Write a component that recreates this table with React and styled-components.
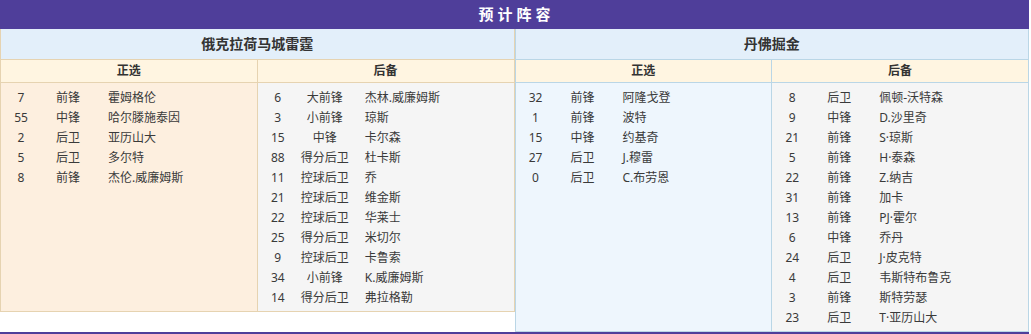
import React from "react";
import styled, { createGlobalStyle } from "styled-components";

const GlobalStyle = createGlobalStyle`
  body {
    margin: 0;
    background: #ffffff;
    font-family: "Noto Sans", "Noto Sans CJK SC", sans-serif;
  }
`;

const teams = [
  {
    name: "俄克拉荷马城雷霆",
    side: "home",
    starters: [
      ["7", "前锋", "霍姆格伦"],
      ["55", "中锋", "哈尔滕施泰因"],
      ["2", "后卫", "亚历山大"],
      ["5", "后卫", "多尔特"],
      ["8", "前锋", "杰伦.威廉姆斯"],
    ],
    bench: [
      ["6", "大前锋", "杰林.威廉姆斯"],
      ["3", "小前锋", "琼斯"],
      ["15", "中锋", "卡尔森"],
      ["88", "得分后卫", "杜卡斯"],
      ["11", "控球后卫", "乔"],
      ["21", "控球后卫", "维金斯"],
      ["22", "控球后卫", "华莱士"],
      ["25", "得分后卫", "米切尔"],
      ["9", "控球后卫", "卡鲁索"],
      ["34", "小前锋", "K.威廉姆斯"],
      ["14", "得分后卫", "弗拉格勒"],
    ],
  },
  {
    name: "丹佛掘金",
    side: "away",
    starters: [
      ["32", "前锋", "阿隆戈登"],
      ["1", "前锋", "波特"],
      ["15", "中锋", "约基奇"],
      ["27", "后卫", "J.穆雷"],
      ["0", "后卫", "C.布劳恩"],
    ],
    bench: [
      ["8", "后卫", "佩顿-沃特森"],
      ["9", "中锋", "D.沙里奇"],
      ["21", "前锋", "S·琼斯"],
      ["5", "前锋", "H·泰森"],
      ["22", "前锋", "Z.纳吉"],
      ["31", "前锋", "加卡"],
      ["13", "前锋", "PJ·霍尔"],
      ["6", "中锋", "乔丹"],
      ["24", "后卫", "J·皮克特"],
      ["4", "后卫", "韦斯特布鲁克"],
      ["3", "前锋", "斯特劳瑟"],
      ["23", "后卫", "T·亚历山大"],
    ],
  },
];

const palette = {
  home: { border: "#e6d3b1", starters: "#fdefdf" },
  away: { border: "#bad6e6", starters: "#eef6fd" },
};

function App() {
  return (
    <>
      <GlobalStyle />
      <Wrapper>
        <Title>预计阵容</Title>
        <Teams>
          {teams.map((team) => (
            <TeamPanel key={team.name} $border={palette[team.side].border}>
              <TeamName>{team.name}</TeamName>
              <Columns $border={palette[team.side].border}>
                <Column $border={palette[team.side].border}>
                  <ColumnHead $border={palette[team.side].border}>正选</ColumnHead>
                  <PlayerList $bg={palette[team.side].starters}>
                    {team.starters.map((p, i) => (
                      <PlayerRow key={i}>
                        <Num>{p[0]}</Num>
                        <Pos>{p[1]}</Pos>
                        <Name>{p[2]}</Name>
                      </PlayerRow>
                    ))}
                  </PlayerList>
                </Column>
                <Column>
                  <ColumnHead $border={palette[team.side].border}>后备</ColumnHead>
                  <PlayerList $bg="#f5f5f5">
                    {team.bench.map((p, i) => (
                      <PlayerRow key={i}>
                        <Num>{p[0]}</Num>
                        <Pos>{p[1]}</Pos>
                        <Name>{p[2]}</Name>
                      </PlayerRow>
                    ))}
                  </PlayerList>
                </Column>
              </Columns>
            </TeamPanel>
          ))}
        </Teams>
        <Footer />
      </Wrapper>
    </>
  );
}

const Wrapper = styled.div`
  width: 1029px;
`;

const Title = styled.div`
  height: 29px;
  line-height: 29px;
  background: #4f3e9a;
  color: #ffffff;
  text-align: center;
  font-size: 15px;
  font-weight: bold;
  letter-spacing: 4px;
  padding-left: 4px;
`;

const Teams = styled.div`
  display: flex;
  align-items: flex-start;
`;

const TeamPanel = styled.div`
  flex: 1;
  border: 1px solid ${({ $border }) => $border};
  border-top: none;
  display: flex;
  flex-direction: column;
`;

const TeamName = styled.div`
  height: 30px;
  line-height: 30px;
  background: #e3effa;
  text-align: center;
  font-size: 14px;
  font-weight: bold;
  color: #333333;
`;

const Columns = styled.div`
  display: flex;
  align-items: stretch;
  border-top: 1px solid ${({ $border }) => $border};
`;

const Column = styled.div`
  flex: 1;
  display: flex;
  flex-direction: column;
  border-right: ${({ $border }) => ($border ? `1px solid ${$border}` : "none")};
`;

const ColumnHead = styled.div`
  height: 22px;
  line-height: 22px;
  background: #fff5e1;
  text-align: center;
  font-size: 12px;
  font-weight: bold;
  color: #333333;
  border-bottom: 1px solid ${({ $border }) => $border};
`;

const PlayerList = styled.ul`
  flex: 1;
  list-style: none;
  margin: 0;
  padding: 5px 0 3px;
  background: ${({ $bg }) => $bg};
`;

const PlayerRow = styled.li`
  display: flex;
  height: 20px;
  line-height: 20px;
  font-size: 12px;
  color: #3a3a3a;
`;

const Num = styled.span`
  width: 40px;
  text-align: center;
`;

const Pos = styled.span`
  width: 54px;
  text-align: center;
`;

const Name = styled.span`
  padding-left: 13px;
  white-space: nowrap;
`;

const Footer = styled.div`
  height: 3px;
  background: #4f3e9a;
`;

export default App;
